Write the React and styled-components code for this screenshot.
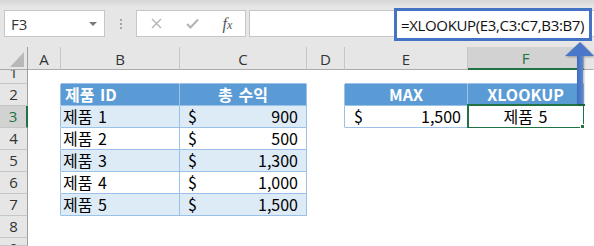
import React from 'react';
import styled, { createGlobalStyle } from 'styled-components';

const GlobalStyle = createGlobalStyle`
  html, body {
    margin: 0;
    padding: 0;
    background: #fff;
    overflow: hidden;
  }
  body {
    font-family: "Noto Sans CJK KR", "Noto Sans", sans-serif;
  }
`;

const GREEN = '#217346';
const HEAD_BLUE = '#5b9bd5';
const BAND = '#ddebf7';
const LINE_BLUE = '#9bc2e6';

const COLS = [
  { key: 'A', w: 33 },
  { key: 'B', w: 119 },
  { key: 'C', w: 127 },
  { key: 'D', w: 38 },
  { key: 'E', w: 123 },
  { key: 'F', w: 116 },
  { key: 'G', w: 0 },
];
const ROWS = [1, 2, 3, 4, 5, 6, 7, 8, 9];

const products = [
  ['제품 1', '900'],
  ['제품 2', '500'],
  ['제품 3', '1,300'],
  ['제품 4', '1,000'],
  ['제품 5', '1,500'],
];

// figure out what sits in each cell
function cellFor(col, row) {
  const c = { br: null, bb: null };
  const inT1 = (col === 'B' || col === 'C') && row >= 2 && row <= 7;
  const inT2 = (col === 'E' || col === 'F') && row >= 2 && row <= 3;

  if ((col === 'A' && row >= 2 && row <= 7) || (col === 'D' && row >= 2 && row <= 3)) {
    c.br = LINE_BLUE;
  }
  if ((col === 'B' || col === 'C' || col === 'E' || col === 'F') && row === 1) {
    c.bb = LINE_BLUE;
  }

  if (inT1 || inT2) {
    c.br = LINE_BLUE;
    c.bb = LINE_BLUE;
  }

  if (inT1) {
    if (row === 2) {
      c.head = true;
      c.fill = HEAD_BLUE;
      c.text = col === 'B' ? '제품 ID' : '총 수익';
      c.align = col === 'B' ? 'left' : 'center';
      c.pad = 4;
    } else {
      const [name, amount] = products[row - 3];
      c.fill = row % 2 === 1 ? BAND : '#fff';
      if (col === 'B') {
        c.text = name;
        c.pad = 2;
      } else {
        c.money = amount;
      }
    }
  }

  if (inT2) {
    if (row === 2) {
      c.head = true;
      c.fill = HEAD_BLUE;
      c.text = col === 'E' ? 'MAX' : 'XLOOKUP';
      c.align = 'center';
    } else if (col === 'E') {
      c.money = '1,500';
      c.moneyPad = [9, 6];
    } else {
      c.text = '제품 5';
      c.align = 'center';
      c.selected = true;
    }
  }
  return c;
}

export default function App() {
  return (
    <Page>
      <GlobalStyle />
      <Toolbar>
        <NameBox>
          <span>F3</span>
          <Caret />
        </NameBox>
        <Grip>
          <i />
          <i />
          <i />
        </Grip>
        <FxBox>
          <FxSlot>
            <svg width="11" height="11" viewBox="0 0 11 11">
              <path d="M1 1 L10 10 M10 1 L1 10" stroke="#b3b3b3" strokeWidth="1.4" fill="none" />
            </svg>
          </FxSlot>
          <FxSlot>
            <svg width="13" height="11" viewBox="0 0 13 11">
              <path d="M1 6 L4.5 9.5 L12 1.5" stroke="#b3b3b3" strokeWidth="2" fill="none" />
            </svg>
          </FxSlot>
          <FxSlot>
            <FxLabel>
              f<small>x</small>
            </FxLabel>
          </FxSlot>
        </FxBox>
        <FormulaInput>
          <Highlight>=XLOOKUP(E3,C3:C7,B3:B7)</Highlight>
        </FormulaInput>
      </Toolbar>

      <Sheet>
        <Corner>
          <svg width="28" height="22" viewBox="0 0 28 22">
            <polygon points="10,20 24,5 24,20" fill="#b8b8b8" />
          </svg>
        </Corner>
        {COLS.map((col) => (
          <ColHead key={col.key} $active={col.key === 'F'} $last={col.key === 'G'}>
            {col.key === 'G' ? '' : col.key}
          </ColHead>
        ))}

        {ROWS.map((row) => (
          <React.Fragment key={row}>
            <RowHead $active={row === 3} $clip={row === 1 ? 'top' : row === 9 ? 'bottom' : null}>
              <span>{row}</span>
            </RowHead>
            {COLS.map((col) => {
              const c = cellFor(col.key, row);
              return (
                <Cell
                  key={col.key}
                  $fill={c.fill}
                  $br={c.br}
                  $bb={c.bb}
                  $head={c.head}
                  $align={c.align}
                  $pad={c.pad}
                >
                  {c.money ? (
                    <Money $l={c.moneyPad ? c.moneyPad[0] : 8} $r={c.moneyPad ? c.moneyPad[1] : 8}>
                      <span>$</span>
                      <span>{c.money}</span>
                    </Money>
                  ) : (
                    c.text
                  )}
                  {c.selected && (
                    <Selection>
                      <Handle />
                    </Selection>
                  )}
                </Cell>
              );
            })}
          </React.Fragment>
        ))}
      </Sheet>

      <Arrow width="32" height="66" viewBox="0 0 32 66">
        <defs>
          <linearGradient id="shaft" x1="0" x2="1" y1="0" y2="0">
            <stop offset="0" stopColor="#3f6cbd" />
            <stop offset="1" stopColor="#5b87d3" />
          </linearGradient>
        </defs>
        <rect x="14" y="14" width="6" height="50" fill="url(#shaft)" />
        <polygon points="2,16 17,2 31,16" fill="#4a77c8" />
      </Arrow>
    </Page>
  );
}

const Page = styled.div`
  position: relative;
  width: 594px;
  height: 246px;
  overflow: hidden;
  background: #fff;
`;

const Toolbar = styled.div`
  box-sizing: border-box;
  height: 47px;
  display: flex;
  align-items: flex-start;
  padding: 10px 0 0 4px;
  background: linear-gradient(#d6d6d6 0, #e6e6e6 7px, #e6e6e6 100%);
`;

const NameBox = styled.div`
  box-sizing: border-box;
  width: 101px;
  height: 27px;
  display: flex;
  align-items: center;
  justify-content: space-between;
  padding: 0 6px 0 6px;
  background: #fff;
  border: 1px solid #c6c6c6;
  font-family: "Open Sans", "Noto Sans", sans-serif;
  font-size: 15px;
  color: #333;
`;

const Caret = styled.i`
  width: 0;
  height: 0;
  border-left: 4px solid transparent;
  border-right: 4px solid transparent;
  border-top: 4px solid #7a7a7a;
  margin-right: 1px;
`;

const Grip = styled.div`
  width: 31px;
  height: 27px;
  display: flex;
  flex-direction: column;
  align-items: center;
  justify-content: center;
  gap: 2px;

  i {
    width: 2px;
    height: 2px;
    background: #a5a5a5;
  }
`;

const FxBox = styled.div`
  box-sizing: border-box;
  width: 110px;
  height: 27px;
  display: grid;
  grid-template-columns: 38px 35px 35px;
  background: #fff;
  border: 1px solid #c6c6c6;
`;

const FxSlot = styled.div`
  display: flex;
  align-items: center;
  justify-content: center;
`;

const FxLabel = styled.span`
  font-family: "Liberation Serif", serif;
  font-style: italic;
  font-size: 16px;
  color: #555;

  small {
    font-size: 12px;
  }
`;

const FormulaInput = styled.div`
  box-sizing: border-box;
  flex: 1;
  height: 27px;
  margin-left: 3px;
  display: flex;
  justify-content: flex-end;
  background: #fff;
  border: 1px solid #c6c6c6;
  border-right: none;
`;

const Highlight = styled.div`
  box-sizing: border-box;
  width: 198px;
  height: 33px;
  margin: -3px 2px 0 0;
  display: flex;
  align-items: center;
  padding: 0 0 0 4px;
  background: #fff;
  border: 3px solid #4472c4;
  font-family: "Open Sans", "Noto Sans", sans-serif;
  font-size: 15px;
  letter-spacing: -0.35px;
  color: #111;
  white-space: nowrap;
  position: relative;
  z-index: 1;
`;

const Sheet = styled.div`
  display: grid;
  grid-template-columns: 28px ${COLS.slice(0, -1).map((c) => c.w + 'px').join(' ')} 1fr;
  grid-template-rows: 23px 14px repeat(7, 22px) 1fr;
  height: 199px;
`;

const Corner = styled.div`
  box-sizing: border-box;
  background: #e6e6e6;
  border-right: 1px solid #9e9e9e;
  border-bottom: 1px solid #ababab;

  svg {
    display: block;
  }
`;

const ColHead = styled.div`
  box-sizing: border-box;
  display: flex;
  align-items: center;
  justify-content: center;
  background: ${(p) => (p.$active ? '#d2d2d2' : '#e6e6e6')};
  border-right: 1px solid ${(p) => (p.$last ? 'transparent' : '#c6c6c6')};
  border-bottom: ${(p) => (p.$active ? `2px solid ${GREEN}` : '1px solid #ababab')};
  font-family: "Open Sans", "Noto Sans", sans-serif;
  font-size: 15px;
  color: ${(p) => (p.$active ? GREEN : '#333')};
  padding-top: 1px;
`;

const RowHead = styled.div`
  box-sizing: border-box;
  display: flex;
  justify-content: center;
  align-items: ${(p) => (p.$clip === 'top' ? 'flex-end' : p.$clip === 'bottom' ? 'flex-start' : 'center')};
  overflow: hidden;
  background: ${(p) => (p.$active ? '#d2d2d2' : '#e6e6e6')};
  border-right: ${(p) => (p.$active ? `2px solid ${GREEN}` : '1px solid #9e9e9e')};
  border-bottom: 1px solid #c6c6c6;
  font-family: "Open Sans", "Noto Sans", sans-serif;
  font-size: 15px;
  color: ${(p) => (p.$active ? GREEN : '#333')};

  span {
    display: block;
    flex: none;
    height: 21px;
    line-height: 21px;
  }
`;

const Cell = styled.div`
  box-sizing: border-box;
  position: relative;
  display: flex;
  align-items: center;
  justify-content: ${(p) =>
    p.$align === 'center' ? 'center' : p.$align === 'right' ? 'flex-end' : 'flex-start'};
  padding: 0 ${(p) => p.$pad ?? 0}px;
  min-width: 0;
  background: ${(p) => p.$fill || '#fff'};
  border-right: 1px solid ${(p) => p.$br || 'transparent'};
  border-bottom: 1px solid ${(p) => p.$bb || 'transparent'};
  font-size: 16px;
  line-height: 21px;
  word-spacing: 2px;
  font-weight: ${(p) => (p.$head ? 700 : 400)};
  color: ${(p) => (p.$head ? '#fff' : '#000')};
  white-space: nowrap;
`;

const Money = styled.div`
  flex: 1;
  display: flex;
  justify-content: space-between;
  padding: 0 ${(p) => p.$r}px 0 ${(p) => p.$l}px;
`;

const Selection = styled.div`
  position: absolute;
  top: -2px;
  left: -1px;
  right: -2px;
  bottom: -2px;
  border: 2px solid ${GREEN};
  pointer-events: none;
`;

const Handle = styled.i`
  position: absolute;
  right: -5px;
  bottom: -5px;
  width: 6px;
  height: 6px;
  background: ${GREEN};
  border: 1px solid #fff;
`;

const Arrow = styled.svg`
  position: absolute;
  left: 563px;
  top: 40px;
  filter: drop-shadow(1px 1px 1px rgba(0, 0, 0, 0.3));
`;
